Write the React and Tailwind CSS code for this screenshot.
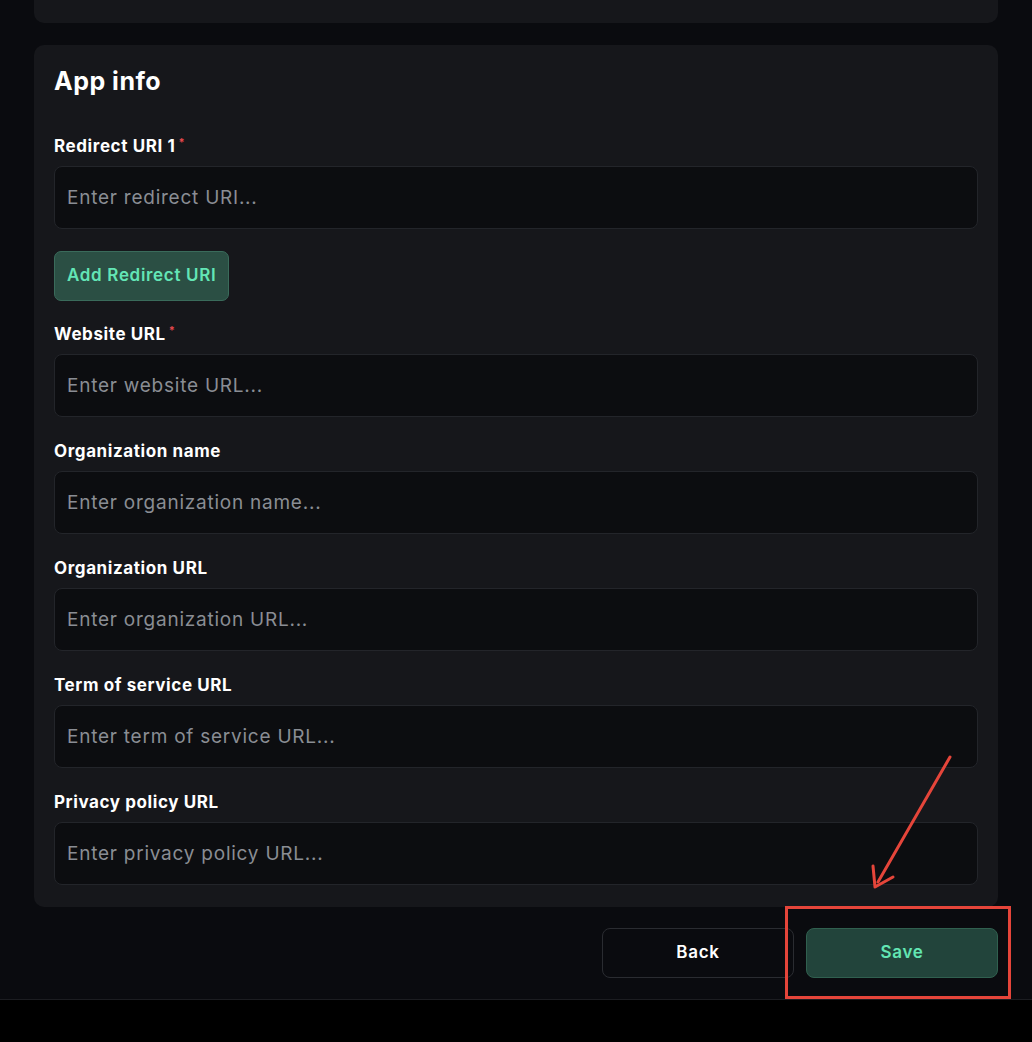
import React from "react";

const fields = [
  { label: "Redirect URI 1", placeholder: "Enter redirect URI...", required: true },
];

const moreFields = [
  { label: "Website URL", placeholder: "Enter website URL...", required: true },
  { label: "Organization name", placeholder: "Enter organization name..." },
  { label: "Organization URL", placeholder: "Enter organization URL..." },
  { label: "Term of service URL", placeholder: "Enter term of service URL..." },
  { label: "Privacy policy URL", placeholder: "Enter privacy policy URL..." },
];

const Field = ({ label, placeholder, required, className = "" }) => (
  <div className={className}>
    <label className="flex h-6 items-center pt-px text-[17px] font-bold leading-6 tracking-[0.035em] text-white">
      {label}
      {required && <span className="ml-[3px] -mt-2 text-[11px] text-[#e5484d]">*</span>}
    </label>
    <input
      className="mt-[9px] h-[63px] w-full rounded-[8px] border border-[#23252a] bg-[#0c0d10] px-3 text-[19px] tracking-[0.04em] text-white outline-none placeholder:text-[#8a8d94]"
      placeholder={placeholder}
    />
  </div>
);

export default function App() {
  return (
    <div className="relative min-h-[1042px] w-full bg-black" style={{ fontFamily: "Inter, 'Noto Sans', sans-serif" }}>
      <div className="border-b border-[#1c1d21] bg-[#0a0b0f] px-[34px] pb-[21px]">
        <div className="h-[23px] rounded-b-[10px] bg-[#16171b]" />

        <div className="mt-[22px] rounded-[10px] bg-[#16171b] px-5 pb-[22px] pt-5">
          <h2 className="text-[25px] font-bold leading-8 tracking-[0.02em] text-white">App info</h2>

          {fields.map((f) => (
            <Field key={f.label} {...f} className="mt-[36px]" />
          ))}

          <button className="mt-[22px] h-[50px] rounded-[7px] border border-[#3a6b5b] bg-[#2b4f44] px-3 text-[17px] font-semibold tracking-[0.04em] text-[#63e6b6]">
            Add Redirect URI
          </button>

          {moreFields.map((f, i) => (
            <Field key={f.label} {...f} className={i === 0 ? "mt-[20px]" : "mt-[21px]"} />
          ))}
        </div>

        <div className="mt-[21px] flex justify-end gap-3">
          <button className="h-[50px] w-[192px] rounded-[8px] border border-[#2a2c31] text-[17px] font-semibold tracking-[0.04em] text-white">
            Back
          </button>
          <button className="h-[50px] w-[192px] rounded-[8px] border border-[#30604f] bg-[#22443b] text-[17px] font-semibold tracking-[0.04em] text-[#62e6b3]">
            Save
          </button>
        </div>
      </div>

      {/* annotation overlay */}
      <div className="pointer-events-none absolute left-[785px] top-[906px] h-[93px] w-[226px] border-[3px] border-[#e5453a]" />
      <svg className="pointer-events-none absolute left-0 top-0" width="1032" height="1042">
        <line x1="950" y1="757" x2="878" y2="882" stroke="#e5453a" strokeWidth="3" strokeLinecap="round" />
        <polyline points="873,866 875,887 893,877" fill="none" stroke="#e5453a" strokeWidth="3" strokeLinecap="round" strokeLinejoin="round" />
      </svg>
    </div>
  );
}
